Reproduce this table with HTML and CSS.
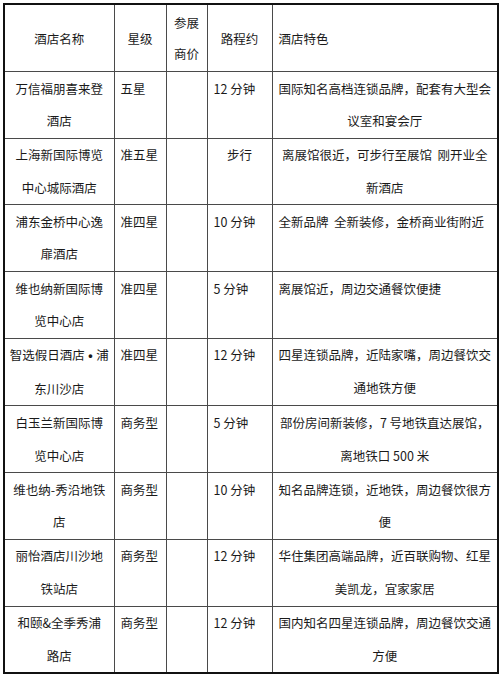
FILE: index.html
```html
<!DOCTYPE html>
<html lang="zh">
<head>
<meta charset="utf-8">
<link rel="stylesheet" href="styles.css">
</head>
<body>
<table class="hotels">
  <colgroup>
    <col class="c-name"><col class="c-star"><col class="c-price"><col class="c-dist"><col class="c-feat">
  </colgroup>
  <thead>
    <tr>
      <th>酒店名称</th>
      <th>星级</th>
      <th>参展<br>商价</th>
      <th>路程约</th>
      <th class="left">酒店特色</th>
    </tr>
  </thead>
  <tbody>
    <tr>
      <td class="center">万信福朋喜来登<br>酒店</td>
      <td>五星</td>
      <td></td>
      <td>12 分钟</td>
      <td class="center">国际知名高档连锁品牌，配套有大型会<br>议室和宴会厅</td>
    </tr>
    <tr>
      <td class="center">上海新国际博览<br>中心城际酒店</td>
      <td>准五星</td>
      <td></td>
      <td class="center">步行</td>
      <td class="center">离展馆很近，可步行至展馆&nbsp; 刚开业全<br>新酒店</td>
    </tr>
    <tr>
      <td class="center">浦东金桥中心逸<br>扉酒店</td>
      <td>准四星</td>
      <td></td>
      <td>10 分钟</td>
      <td>全新品牌&nbsp; 全新装修，金桥商业街附近</td>
    </tr>
    <tr>
      <td class="center">维也纳新国际博<br>览中心店</td>
      <td>准四星</td>
      <td></td>
      <td>5 分钟</td>
      <td>离展馆近，周边交通餐饮便捷</td>
    </tr>
    <tr>
      <td class="center">智选假日酒店<span class="dot"> • </span>浦<br>东川沙店</td>
      <td>准四星</td>
      <td></td>
      <td>12 分钟</td>
      <td class="center">四星连锁品牌，近陆家嘴，周边餐饮交<br>通地铁方便</td>
    </tr>
    <tr>
      <td class="center">白玉兰新国际博<br>览中心店</td>
      <td>商务型</td>
      <td></td>
      <td>5 分钟</td>
      <td class="center">部份房间新装修，7 号地铁直达展馆，<br>离地铁口 500 米</td>
    </tr>
    <tr>
      <td class="center">维也纳-秀沿地铁<br>店</td>
      <td>商务型</td>
      <td></td>
      <td>10 分钟</td>
      <td class="center">知名品牌连锁，近地铁，周边餐饮很方<br>便</td>
    </tr>
    <tr>
      <td class="center">丽怡酒店川沙地<br>铁站店</td>
      <td>商务型</td>
      <td></td>
      <td>12 分钟</td>
      <td class="center">华住集团高端品牌，近百联购物、红星<br>美凯龙，宜家家居</td>
    </tr>
    <tr>
      <td class="center">和颐&amp;全季秀浦<br>路店</td>
      <td>商务型</td>
      <td></td>
      <td>12 分钟</td>
      <td class="center">国内知名四星连锁品牌，周边餐饮交通<br>方便</td>
    </tr>
  </tbody>
</table>
</body>
</html>
```

FILE: styles.css
```css
html, body {
  margin: 0;
  padding: 0;
  background: #ffffff;
}

body {
  padding: 3px 0 0 3px;
  font-family: "Noto Sans CJK SC", "Noto Sans", sans-serif;
  font-size: 12.5px;
  color: #1a1a1a;
}

.hotels {
  width: 494px;
  table-layout: fixed;
  border-collapse: collapse;
  border: 2.5px solid #111111;
}

.c-name { width: 110px; }
.c-star { width: 52px; }
.c-price { width: 41px; }
.c-dist { width: 65px; }
.c-feat { width: 226px; }

.hotels th,
.hotels td {
  border: 1px solid #4a4a4a;
  padding: 0 0 0 6px;
  white-space: nowrap;
  overflow: visible;
  text-align: left;
}

.hotels th {
  height: 66px;
  line-height: 31px;
  font-weight: normal;
  vertical-align: middle;
  text-align: center;
  padding: 0;
}

.hotels td {
  height: 64px;
  line-height: 32.6px;
  vertical-align: top;
  padding-top: 0.5px;
}

.hotels th.left {
  text-align: left;
  padding-left: 6px;
}

.hotels td.center {
  text-align: center;
  padding: 0.5px 0 0 0;
}

.dot {
  font-family: "Liberation Sans", sans-serif;
  font-weight: bold;
}
```
